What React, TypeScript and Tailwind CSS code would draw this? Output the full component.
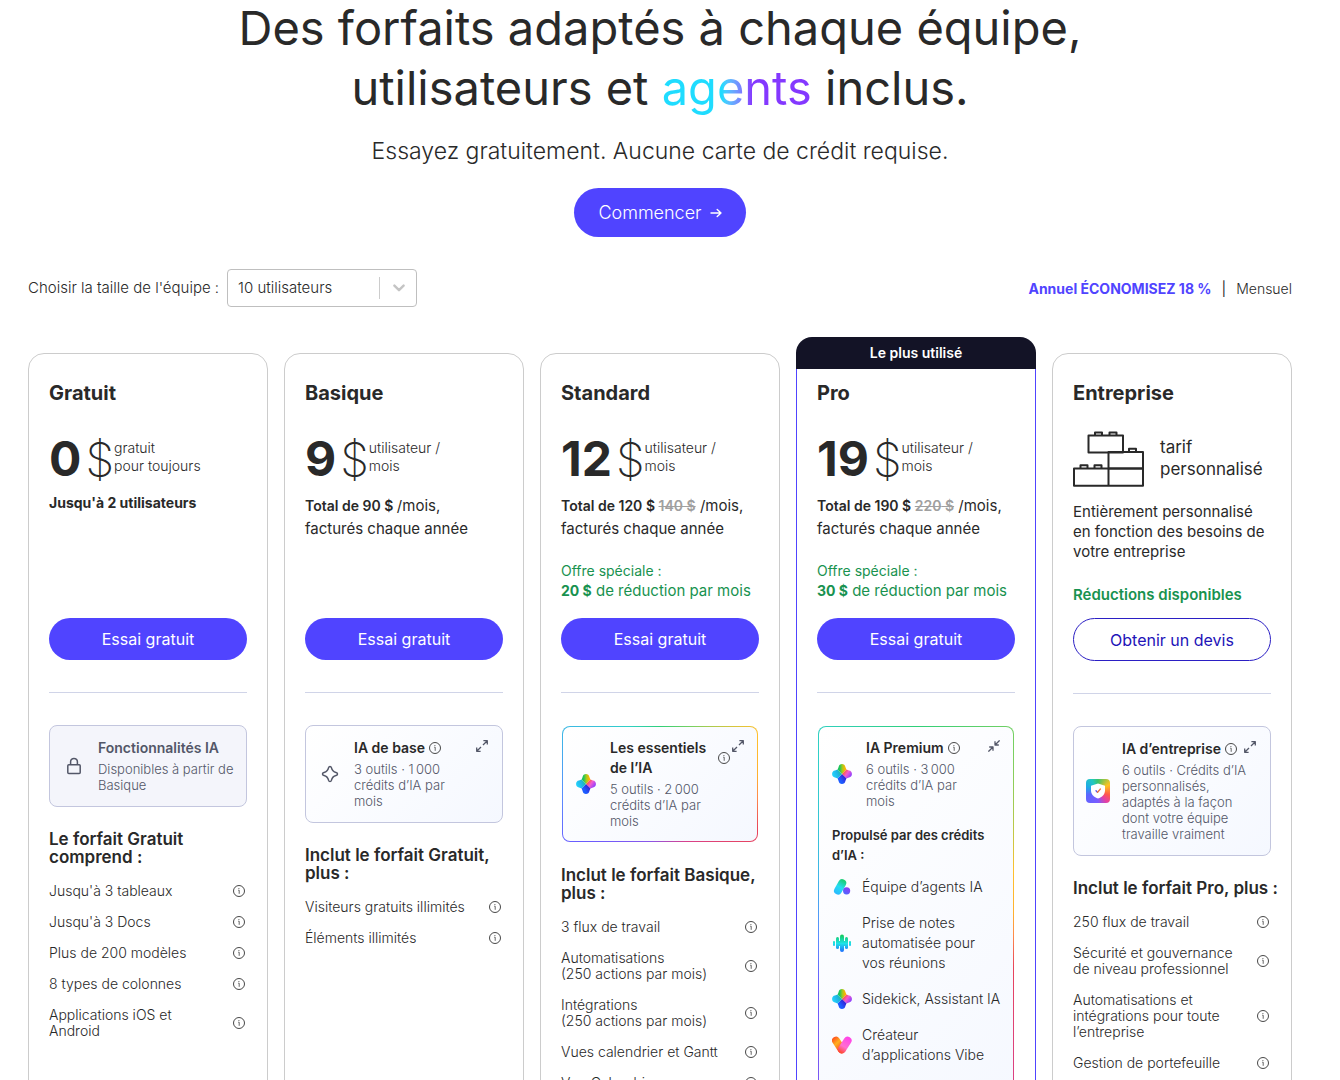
import type { ReactNode } from "react";

/* ---------- Icons ---------- */

function InfoIcon() {
  return (
    <svg viewBox="0 0 12 12" className="size-3 shrink-0" fill="none" aria-hidden="true">
      <circle cx="6" cy="6" r="5.500" stroke="#333333" strokeWidth="0.9" />
      <path d="M5.200 5.200H6.200V8.800M5.900 3V4" stroke="#555555" strokeWidth="0.9" />
    </svg>
  );
}

function ArrowRightIcon() {
  return (
    <svg viewBox="0 0 12 12" className="size-3 shrink-0" fill="none" stroke="currentColor" strokeWidth="1.400" strokeLinecap="round" strokeLinejoin="round" aria-hidden="true">
      <path d="M1 6H11M7.200 2.400L11 6L7.200 9.600" />
    </svg>
  );
}

function ExpandIcon() {
  return (
    <svg viewBox="0 0 12 12" className="size-3" fill="none" stroke="#535768" strokeWidth="1.300" strokeLinejoin="round" aria-hidden="true">
      <path d="M7.400 0.700H11.300V4.600M11.300 0.700L7 5M4.600 11.300H0.700V7.400M0.700 11.300L5 7" />
    </svg>
  );
}

function CollapseIcon() {
  return (
    <svg viewBox="0 0 12 12" className="size-3" fill="none" stroke="#535768" strokeWidth="1.300" strokeLinejoin="round" aria-hidden="true">
      <path d="M7 1.200V5H10.800M7 5L11.600 0.400M1.200 7H5V10.800M5 7L0.400 11.600" />
    </svg>
  );
}

function LockIcon() {
  return (
    <svg viewBox="0 0 24 24" className="size-6" fill="none" stroke="#535768" strokeWidth="1.500" strokeLinejoin="round" aria-hidden="true">
      <rect x="5.800" y="10.800" width="12.400" height="8.600" rx="1" />
      <path d="M8.600 10.800V7.800a3.400 3.400 0 0 1 6.800 0v3" />
    </svg>
  );
}

function SparkIcon() {
  return (
    <svg viewBox="0 0 24 24" className="size-6" fill="none" stroke="#535768" strokeWidth="1.500" strokeLinejoin="round" aria-hidden="true">
      <path d="M10.600 5.600c.4-1.500 2.400-1.500 2.800 0 .6 2.600 1.600 4.100 4.600 4.800 2 .5 2 2.700 0 3.200-3 .7-4 2.200-4.600 4.800-.4 1.500-2.400 1.500-2.800 0-.6-2.600-1.600-4.100-4.600-4.800-2-.5-2-2.700 0-3.200 3-.7 4-2.200 4.600-4.800z" />
    </svg>
  );
}

function SidekickIcon({ id }: { id: string }) {
  return (
    <svg viewBox="0 0 20 20" className="size-5" aria-hidden="true">
      <defs>
        <clipPath id={`${id}-star`}>
          <path d="M6.600 3C6.900-.9 13.100-.9 13.400 3L14.400 5.600 17 6.600C20.900 6.900 20.900 13.100 17 13.400L14.400 14.400 13.400 17C13.100 20.900 6.900 20.900 6.600 17L5.600 14.400 3 13.400C-.9 13.100-.9 6.900 3 6.600L5.600 5.600Z" />
        </clipPath>
        <linearGradient id={`${id}-top`} x1="5" x2="14" y1="0" y2="0" gradientUnits="userSpaceOnUse">
          <stop offset="0.3" stopColor="#1fc45a" />
          <stop offset="0.6" stopColor="#a3c91e" />
          <stop offset="0.9" stopColor="#ffb400" />
        </linearGradient>
        <linearGradient id={`${id}-right`} x1="10" x2="20" y1="6" y2="13" gradientUnits="userSpaceOnUse">
          <stop offset="0.15" stopColor="#ff5a1f" />
          <stop offset="0.5" stopColor="#f45bd0" />
          <stop offset="0.9" stopColor="#8b3dff" />
        </linearGradient>
        <linearGradient id={`${id}-bottom`} x1="14" x2="7" y1="12" y2="17" gradientUnits="userSpaceOnUse">
          <stop offset="0" stopColor="#3b12c9" />
          <stop offset="0.8" stopColor="#1d5cff" />
        </linearGradient>
        <linearGradient id={`${id}-left`} x1="0" x2="9" y1="12" y2="8" gradientUnits="userSpaceOnUse">
          <stop offset="0" stopColor="#25d8ff" />
          <stop offset="0.6" stopColor="#1fb5e8" />
          <stop offset="1" stopColor="#1bbf9a" />
        </linearGradient>
      </defs>
      <g clipPath={`url(#${id}-star)`}>
        <path d="M10 10L0 0H20Z" fill={`url(#${id}-top)`} />
        <path d="M10 10L20 0V20Z" fill={`url(#${id}-right)`} />
        <path d="M10 10L20 20H0Z" fill={`url(#${id}-bottom)`} />
        <path d="M10 10L0 20V0Z" fill={`url(#${id}-left)`} />
      </g>
    </svg>
  );
}

function AgentsIcon() {
  return (
    <svg viewBox="0 0 20 20" className="size-5" aria-hidden="true">
      <defs>
        <linearGradient id="agents-bar" x1="13" x2="4" y1="2" y2="17" gradientUnits="userSpaceOnUse">
          <stop offset="0" stopColor="#18c957" />
          <stop offset="0.55" stopColor="#25ddf2" />
          <stop offset="1" stopColor="#2bb8ff" />
        </linearGradient>
        <linearGradient id="agents-dot" x1="17" x2="12" y1="10" y2="17" gradientUnits="userSpaceOnUse">
          <stop offset="0" stopColor="#9436f5" />
          <stop offset="1" stopColor="#4a6bff" />
        </linearGradient>
      </defs>
      <path d="M10.200 6.200L6 13.600" stroke="url(#agents-bar)" strokeWidth="8" strokeLinecap="round" />
      <circle cx="14.600" cy="13.800" r="3.600" fill="url(#agents-dot)" />
    </svg>
  );
}

function NotetakerIcon() {
  return (
    <svg viewBox="0 0 20 20" className="size-5" aria-hidden="true">
      <defs>
        <linearGradient id="notes-fill" x1="0" x2="0" y1="2" y2="19" gradientUnits="userSpaceOnUse">
          <stop offset="0" stopColor="#14c95a" />
          <stop offset="0.5" stopColor="#1fe3e8" />
          <stop offset="1" stopColor="#1d6bff" />
        </linearGradient>
      </defs>
      <g fill="url(#notes-fill)">
        <rect x="1" y="8" width="2" height="5" rx="1" />
        <rect x="4" y="4" width="3" height="12" rx="1.500" />
        <rect x="8" y="1.500" width="4" height="17.500" rx="2" />
        <rect x="13" y="4" width="3" height="12" rx="1.500" />
        <rect x="17" y="8" width="2" height="5" rx="1" />
        <rect x="4" y="8" width="12" height="5" />
      </g>
    </svg>
  );
}

function VibeIcon() {
  return (
    <svg viewBox="0 0 20 20" className="size-5" aria-hidden="true">
      <defs>
        <linearGradient id="vibe-left" x1="1" x2="12" y1="4" y2="16" gradientUnits="userSpaceOnUse">
          <stop offset="0" stopColor="#ff5a1f" />
          <stop offset="0.35" stopColor="#ffb01f" />
          <stop offset="0.8" stopColor="#ff4a2a" />
        </linearGradient>
        <linearGradient id="vibe-right" x1="17" x2="8" y1="3" y2="17" gradientUnits="userSpaceOnUse">
          <stop offset="0" stopColor="#ff45e8" />
          <stop offset="0.6" stopColor="#ff6fd0" />
          <stop offset="1" stopColor="#ff4a35" />
        </linearGradient>
      </defs>
      <path d="M4 5.600L9.600 14.200" stroke="url(#vibe-left)" strokeWidth="8" strokeLinecap="round" />
      <path d="M15.600 5.600L10 14.400" stroke="url(#vibe-right)" strokeWidth="8" strokeLinecap="round" />
    </svg>
  );
}

function ShieldIcon() {
  return (
    <span className="flex size-6 items-center justify-center rounded bg-[conic-gradient(#3ac46b_0deg,#ffc21f_60deg,#ff5a4a_110deg,#e83fa0_140deg,#7a5cff_180deg,#5b66ff_250deg,#1fa8e8_290deg,#22c9c0_330deg,#3ac46b_360deg)]">
      <svg viewBox="0 0 16 16" className="size-4" aria-hidden="true">
        <path d="M8 .6L15 2.800V7.200C15 11.400 12 14.200 8 15.500 4 14.200 1 11.400 1 7.200V2.800Z" fill="#ffffff" />
        <path d="M6 7.800L7.400 9.200" stroke="#5b50e8" strokeWidth="1.300" strokeLinecap="round" />
        <path d="M7.600 9.200L10.400 6" stroke="#f0733a" strokeWidth="1.300" strokeLinecap="round" />
      </svg>
    </span>
  );
}

function BricksIcon() {
  return (
    <svg viewBox="0 0 71 56" className="h-14 w-[71px] shrink-0" fill="none" stroke="#292929" strokeWidth="2" strokeLinejoin="round" aria-hidden="true">
      <path d="M15.500 4.500H50V21.500H15.500ZM22 4.500V1.500H29V4.500M36.500 4.500V1.500H43.500V4.500" />
      <path d="M35.500 21H70V37.500H35.500ZM56 21V17.800H63V21" />
      <path d="M1 37.500H70V54.800H1ZM35.500 37.500V54.800M7.500 37.500V34.300H14.500V37.500M21.500 37.500V34.300H28.500V37.500" />
    </svg>
  );
}

/* ---------- Building blocks ---------- */

function Card({ name, banner, children }: { name: string; banner?: string; children: ReactNode }) {
  return (
    <section
      className={
        banner
          ? "relative flex flex-col border-x border-[#5044ff] px-5 pt-[21px] pb-8"
          : "flex flex-col rounded-2xl border border-[#cccccc] px-5 pt-5 pb-8"
      }
    >
      {banner && (
        <div className="absolute -inset-x-px -top-4 h-8 rounded-t-2xl bg-[#131326] text-center text-[14px] leading-8 font-semibold text-white">
          {banner}
        </div>
      )}
      <h2 className="text-[20px] leading-[38px] font-bold">{name}</h2>
      {children}
    </section>
  );
}

function Price({ amount, lines }: { amount: string; lines: [string, string] }) {
  return (
    <div className="mt-[18px] flex h-[58px] items-center whitespace-nowrap">
      <span className="text-[48px] font-bold">{amount}</span>
      <span className="ml-1 text-[46px] font-extralight">$</span>
      <span className="pb-1 text-[14px] leading-[18px] font-light">
        {lines[0]}
        <br />
        {lines[1]}
      </span>
    </div>
  );
}

function Total({ now, before }: { now: string; before?: string }) {
  return (
    <p className="mt-1.5 text-[15px] leading-[23px] whitespace-nowrap">
      <span className="text-[14px] font-semibold">
        Total de {now} $ {before && <s className="text-[#a0a0a0]">{before} $</s>}
      </span>{" "}
      /mois,
      <br />
      facturés chaque année
    </p>
  );
}

function Offer({ amount }: { amount: string }) {
  return (
    <p className="mt-[21px] text-[15px] leading-5 whitespace-nowrap text-[#18924f]">
      <span className="text-[14px]">Offre spéciale :</span>
      <br />
      <b className="text-[14px] font-bold">{amount} $</b> de réduction par mois
    </p>
  );
}

function Top({ children }: { children: ReactNode }) {
  return <div className="min-h-[206px]">{children}</div>;
}

function TrialButton() {
  return (
    <button type="button" className="h-[42px] w-full rounded-full bg-[#5044ff] text-[16px] text-white">
      Essai gratuit
    </button>
  );
}

function Divider() {
  return <hr className="my-8 border-[#d0d4e8]" />;
}

function AiHeader({ icon, title, lines, action }: { icon: ReactNode; title: ReactNode; lines: string[]; action?: "expand" | "collapse" }) {
  return (
    <div className="relative flex items-center gap-3 whitespace-nowrap">
      <span className="flex size-6 shrink-0 items-center justify-center">{icon}</span>
      <div>
        <div className="flex items-center gap-1">
          <h3 className="text-[14px] leading-5 font-semibold">{title}</h3>
          {action && (
            <button type="button" aria-label="En savoir plus">
              <InfoIcon />
            </button>
          )}
        </div>
        <p className="mt-[3px] text-[13px] leading-4 font-light text-[#535768]">
          {lines.map((line) => (
            <span key={line} className="block">
              {line}
            </span>
          ))}
        </p>
      </div>
      {action && (
        <button type="button" aria-label={action === "expand" ? "Développer" : "Réduire"} className="absolute top-[2px] right-0.5">
          {action === "expand" ? <ExpandIcon /> : <CollapseIcon />}
        </button>
      )}
    </div>
  );
}

function RainbowBox({ children }: { children: ReactNode }) {
  return (
    <div className="m-px rounded-lg bg-[conic-gradient(#2fcf78_0deg,#7bd060_30deg,#ffc02e_62deg,#ffb02e_85deg,#ff8a4a_98deg,#e8445a_115deg,#d8408a_155deg,#8a55e8_190deg,#6a5cff_235deg,#5b8cff_262deg,#3fb4e8_295deg,#2fd0c8_330deg,#2fcf78_360deg)] p-px">
      <div className="rounded-[7px] bg-linear-135 from-white to-[#f5f8ff] px-[11px] pt-[11px] pb-3">{children}</div>
    </div>
  );
}

function Features({ title, items }: { title: ReactNode; items: ReactNode[] }) {
  return (
    <>
      <h3 className="mt-[23px] text-[17px] leading-[18px] font-semibold whitespace-nowrap">{title}</h3>
      <ul className="mt-[17px] flex flex-col gap-[15px]">
        {items.map((item, i) => (
          <li key={i} className="flex items-center justify-between pr-0.5 text-[14px] leading-4 font-light">
            <span className="whitespace-nowrap">{item}</span>
            <button type="button" aria-label="En savoir plus">
              <InfoIcon />
            </button>
          </li>
        ))}
      </ul>
    </>
  );
}

function Tool({ icon, children }: { icon: ReactNode; children: ReactNode }) {
  return (
    <li className="flex items-center gap-2.5 text-[14px] leading-5 font-light whitespace-nowrap">
      {icon}
      <span>{children}</span>
    </li>
  );
}

/* ---------- Page ---------- */

export default function App() {
  return (
    <main className="h-screen overflow-hidden bg-white pr-12 pl-7 font-['Inter',sans-serif] text-[#292929]">
      <header className="flex flex-col items-center text-center">
        <h1 className="-mt-0.5 text-[47px] leading-[60px] font-normal">
          Des forfaits adaptés à chaque équipe,
          <br />
          utilisateurs et{" "}
          <span className="bg-linear-to-r from-[#1fdcff] from-40% to-[#8438ff] to-60% bg-clip-text text-transparent">agents</span> inclus.
        </h1>
        <p className="mt-[17px] text-[23px] leading-8 font-light">Essayez gratuitement. Aucune carte de crédit requise.</p>
        <button type="button" className="mt-[21px] flex h-[49px] items-center gap-2 rounded-full bg-[#5044ff] px-6 text-[18px] font-light text-white">
          Commencer
          <ArrowRightIcon />
        </button>
      </header>

      <div className="mt-8 flex items-center justify-between text-[14px]">
        <div className="flex items-center gap-2 text-[15px]">
          <label htmlFor="team-size" className="font-light">
            Choisir la taille de l'équipe :
          </label>
          <div className="relative">
            <select id="team-size" defaultValue="10" className="h-[38px] w-[190px] appearance-none rounded border border-[#bfbfbf] bg-white pl-2.5 font-light">
              <option value="10">10 utilisateurs</option>
            </select>
            <span className="pointer-events-none absolute inset-y-2 right-0 flex w-[38px] items-center justify-center border-l border-[#cccccc]">
              <svg viewBox="0 0 12 8" className="h-2 w-3" fill="none" stroke="#c4c4c4" strokeWidth="2.400" strokeLinecap="round" strokeLinejoin="round" aria-hidden="true">
                <path d="M1.400 1.600L6 6.200L10.600 1.600" />
              </svg>
            </span>
          </div>
        </div>
        <div className="flex items-center gap-2.5">
          <button type="button" className="font-bold text-[#5044ff]">
            Annuel ÉCONOMISEZ 18 %
          </button>
          <span>|</span>
          <button type="button" className="font-light">
            Mensuel
          </button>
        </div>
      </div>

      <div className="mt-[46px] grid grid-cols-5 gap-4">
        <Card name="Gratuit">
          <Top>
            <Price amount="0" lines={["gratuit", "pour toujours"]} />
            <p className="mt-[3px] text-[14px] leading-[23px] font-bold">Jusqu'à 2 utilisateurs</p>
          </Top>
          <TrialButton />
          <Divider />
          <div className="rounded-lg border border-[#c3c6de] bg-[#f4f5fb] px-3 pt-3 pb-[13px]">
            <AiHeader icon={<LockIcon />} title={<span className="text-[#535768]">Fonctionnalités IA</span>} lines={["Disponibles à partir de", "Basique"]} />
          </div>
          <Features
            title={<>Le forfait Gratuit<br />comprend :</>}
            items={["Jusqu'à 3 tableaux", "Jusqu'à 3 Docs", "Plus de 200 modèles", "8 types de colonnes", <>Applications iOS et<br />Android</>]}
          />
        </Card>

        <Card name="Basique">
          <Top>
            <Price amount="9" lines={["utilisateur /", "mois"]} />
            <Total now="90" />
          </Top>
          <TrialButton />
          <Divider />
          <div className="rounded-lg border border-[#c3c6de] bg-linear-135 from-white to-[#f5f8ff] px-3 pt-3 pb-[13px]">
            <AiHeader icon={<SparkIcon />} title="IA de base" lines={["3 outils · 1\u202f000", "crédits d’IA par", "mois"]} action="expand" />
          </div>
          <Features title={<>Inclut le forfait Gratuit,<br />plus :</>} items={["Visiteurs gratuits illimités", "Éléments illimités"]} />
        </Card>

        <Card name="Standard">
          <Top>
            <Price amount="12" lines={["utilisateur /", "mois"]} />
            <Total now="120" before="140" />
            <Offer amount="20" />
          </Top>
          <TrialButton />
          <Divider />
          <RainbowBox>
            <AiHeader icon={<SidekickIcon id="essentials" />} title={<span className="block min-w-26">Les essentiels<br />de l’IA</span>} lines={["5 outils · 2\u202f000", "crédits d’IA par", "mois"]} action="expand" />
          </RainbowBox>
          <Features
            title={<>Inclut le forfait Basique,<br />plus :</>}
            items={[
              "3 flux de travail",
              <>Automatisations<br />(250 actions par mois)</>,
              <>Intégrations<br />(250 actions par mois)</>,
              "Vues calendrier et Gantt",
              "Vue Calendrier",
            ]}
          />
        </Card>

        <Card name="Pro" banner="Le plus utilisé">
          <Top>
            <Price amount="19" lines={["utilisateur /", "mois"]} />
            <Total now="190" before="220" />
            <Offer amount="30" />
          </Top>
          <TrialButton />
          <Divider />
          <RainbowBox>
            <AiHeader icon={<SidekickIcon id="premium" />} title="IA Premium" lines={["6 outils · 3\u202f000", "crédits d’IA par", "mois"]} action="collapse" />
            <div className="pt-4 pb-10 pl-0.5">
              <h4 className="text-[13px] leading-5 font-semibold whitespace-nowrap">
                Propulsé par des crédits
                <br />
                d’IA :
              </h4>
              <ul className="mt-3 flex flex-col gap-4">
                <Tool icon={<AgentsIcon />}>Équipe d’agents IA</Tool>
                <Tool icon={<NotetakerIcon />}>
                  Prise de notes
                  <br />
                  automatisée pour
                  <br />
                  vos réunions
                </Tool>
                <Tool icon={<SidekickIcon id="assistant" />}>Sidekick, Assistant IA</Tool>
                <Tool icon={<VibeIcon />}>
                  Créateur
                  <br />
                  d’applications Vibe
                </Tool>
              </ul>
            </div>
          </RainbowBox>
        </Card>

        <Card name="Entreprise">
          <Top>
            <div className="mt-[18px] flex h-[58px] items-center gap-4 text-[17px] leading-[22px]">
              <BricksIcon />
              <span className="pb-0.5">
                tarif
                <br />
                personnalisé
              </span>
            </div>
            <p className="mt-3.5 text-[15px] leading-5 whitespace-nowrap">
              Entièrement personnalisé
              <br />
              en fonction des besoins de
              <br />
              votre entreprise
            </p>
            <p className="mt-[23px] text-[15px] leading-5 font-semibold whitespace-nowrap text-[#18924f]">Réductions disponibles</p>
          </Top>
          <button type="button" className="h-[43px] w-full rounded-full border border-[#2b1fc4] text-[16px] text-[#2213b8]">
            Obtenir un devis
          </button>
          <Divider />
          <div className="rounded-lg border border-[#c3c6de] bg-linear-135 from-white to-[#f5f8ff] px-3 pt-3 pb-[13px]">
            <AiHeader
              icon={<ShieldIcon />}
              title="IA d’entreprise"
              lines={["6 outils · Crédits d’IA", "personnalisés,", "adaptés à la façon", "dont votre équipe", "travaille vraiment"]}
              action="expand"
            />
          </div>
          <Features
            title="Inclut le forfait Pro, plus :"
            items={[
              "250 flux de travail",
              <>Sécurité et gouvernance<br />de niveau professionnel</>,
              <>Automatisations et<br />intégrations pour toute<br />l’entreprise</>,
              "Gestion de portefeuille",
            ]}
          />
        </Card>
      </div>
    </main>
  );
}
